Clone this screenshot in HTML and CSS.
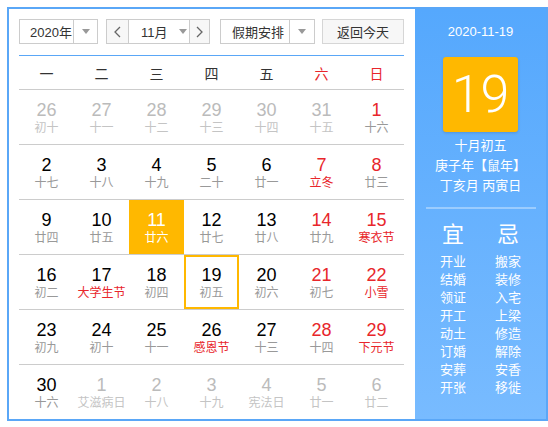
FILE: index.html
```html
<!DOCTYPE html>
<html lang="zh-CN">

<head>
    <meta charset="UTF-8" />
    <meta name="viewport" content="width=device-width, initial-scale=1.0" />
    <title>万年历</title>
    <link rel="stylesheet" href="styles.css">
</head>

<body>
    <div class="calendar">
        <div class="main">
            <div class="toolbar">
                <div class="select year">
                    <span class="value">2020年</span>
                    <span class="arrow"><i class="caret"></i></span>
                </div>
                <div class="select month">
                    <span class="step">
                        <svg width="7" height="12" viewBox="0 0 7 12"><polyline points="6,1 1,6 6,11" fill="none" stroke="#666" stroke-width="1.3" /></svg>
                    </span>
                    <span class="value">11月<i class="caret"></i></span>
                    <span class="step next">
                        <svg width="7" height="12" viewBox="0 0 7 12"><polyline points="1,1 6,6 1,11" fill="none" stroke="#666" stroke-width="1.3" /></svg>
                    </span>
                </div>
                <div class="select holiday">
                    <span class="value">假期安排</span>
                    <span class="arrow"><i class="caret"></i></span>
                </div>
                <button class="today" type="button">返回今天</button>
            </div>

            <div class="weekdays">
                <span>一</span><span>二</span><span>三</span><span>四</span><span>五</span>
                <span class="red">六</span><span class="red">日</span>
            </div>

            <div class="week">
                <div class="day other"><b>26</b><em>初十</em></div>
                <div class="day other"><b>27</b><em>十一</em></div>
                <div class="day other"><b>28</b><em>十二</em></div>
                <div class="day other"><b>29</b><em>十三</em></div>
                <div class="day other"><b>30</b><em>十四</em></div>
                <div class="day other"><b>31</b><em>十五</em></div>
                <div class="day weekend"><b>1</b><em>十六</em></div>
            </div>
            <div class="week">
                <div class="day"><b>2</b><em>十七</em></div>
                <div class="day"><b>3</b><em>十八</em></div>
                <div class="day"><b>4</b><em>十九</em></div>
                <div class="day"><b>5</b><em>二十</em></div>
                <div class="day"><b>6</b><em>廿一</em></div>
                <div class="day weekend"><b>7</b><em class="fest">立冬</em></div>
                <div class="day weekend"><b>8</b><em>廿三</em></div>
            </div>
            <div class="week">
                <div class="day"><b>9</b><em>廿四</em></div>
                <div class="day"><b>10</b><em>廿五</em></div>
                <div class="day active"><b>11</b><em>廿六</em></div>
                <div class="day"><b>12</b><em>廿七</em></div>
                <div class="day"><b>13</b><em>廿八</em></div>
                <div class="day weekend"><b>14</b><em>廿九</em></div>
                <div class="day weekend"><b>15</b><em class="fest">寒衣节</em></div>
            </div>
            <div class="week">
                <div class="day"><b>16</b><em>初二</em></div>
                <div class="day"><b>17</b><em class="fest">大学生节</em></div>
                <div class="day"><b>18</b><em>初四</em></div>
                <div class="day selected"><b>19</b><em>初五</em></div>
                <div class="day"><b>20</b><em>初六</em></div>
                <div class="day weekend"><b>21</b><em>初七</em></div>
                <div class="day weekend"><b>22</b><em class="fest">小雪</em></div>
            </div>
            <div class="week">
                <div class="day"><b>23</b><em>初九</em></div>
                <div class="day"><b>24</b><em>初十</em></div>
                <div class="day"><b>25</b><em>十一</em></div>
                <div class="day"><b>26</b><em class="fest">感恩节</em></div>
                <div class="day"><b>27</b><em>十三</em></div>
                <div class="day weekend"><b>28</b><em>十四</em></div>
                <div class="day weekend"><b>29</b><em class="fest">下元节</em></div>
            </div>
            <div class="week last">
                <div class="day"><b>30</b><em>十六</em></div>
                <div class="day other"><b>1</b><em>艾滋病日</em></div>
                <div class="day other"><b>2</b><em>十八</em></div>
                <div class="day other"><b>3</b><em>十九</em></div>
                <div class="day other"><b>4</b><em>宪法日</em></div>
                <div class="day other"><b>5</b><em>廿一</em></div>
                <div class="day other"><b>6</b><em>廿二</em></div>
            </div>
        </div>

        <div class="side">
            <div class="date">2020-11-19</div>
            <div class="bigday">19</div>
            <div class="lunar">
                <p>十月初五</p>
                <p>庚子年【鼠年】</p>
                <p>丁亥月 丙寅日</p>
            </div>
            <div class="divider"></div>
            <div class="advice">
                <ul>
                    <li class="head">宜</li>
                    <li>开业</li>
                    <li>结婚</li>
                    <li>领证</li>
                    <li>开工</li>
                    <li>动土</li>
                    <li>订婚</li>
                    <li>安葬</li>
                    <li>开张</li>
                </ul>
                <ul>
                    <li class="head">忌</li>
                    <li>搬家</li>
                    <li>装修</li>
                    <li>入宅</li>
                    <li>上梁</li>
                    <li>修造</li>
                    <li>解除</li>
                    <li>安香</li>
                    <li>移徙</li>
                </ul>
            </div>
        </div>
    </div>
</body>

</html>
```

FILE: styles.css
```css
body {
    margin: 0;
    font-family: "Liberation Sans", "Noto Sans CJK SC", sans-serif;
    background-color: white;
    color: #333;
}

.calendar {
    display: flex;
    margin: 7px 0 0 7px;
    width: 537px;
    height: 410px;
    border: 2px solid #5aa7f7;
}

.main {
    width: 385px;
    padding: 10px 11px 0 10px;
}

/* toolbar */

.toolbar {
    display: flex;
    height: 25px;
    padding-bottom: 11px;
    border-bottom: 1px solid #5aa7f7;
    font-size: 13px;
}

.select {
    display: flex;
    box-sizing: border-box;
    height: 25px;
    border: 1px solid #ccc;
    background-color: white;
}

.select .value {
    display: flex;
    align-items: center;
    white-space: nowrap;
    color: #333;
}

.select .arrow {
    display: flex;
    align-items: center;
    justify-content: center;
    border-left: 1px solid #ccc;
}

.caret {
    display: inline-block;
    flex-shrink: 0;
    width: 0;
    height: 0;
    border-left: 4px solid transparent;
    border-right: 4px solid transparent;
    border-top: 5px solid #999;
}

.year {
    width: 79px;
}

.year .value {
    width: 54px;
    padding-left: 10px;
    box-sizing: border-box;
}

.year .arrow {
    width: 23px;
}

.month {
    width: 104px;
    margin-left: 8px;
}

.month .step {
    display: flex;
    align-items: center;
    justify-content: center;
    width: 21px;
    background-color: #f7f7f7;
}

.month .step.next {
    width: 19px;
    border-left: 1px solid #ccc;
}

.month .value {
    width: 61px;
    box-sizing: border-box;
    padding-left: 12px;
    border-left: 1px solid #ccc;
    gap: 11px;
}

.holiday {
    width: 95px;
    margin-left: 10px;
}

.holiday .value {
    width: 69px;
    box-sizing: border-box;
    padding-left: 11px;
}

.holiday .arrow {
    width: 24px;
}

.today {
    width: 82px;
    height: 25px;
    margin-left: 7px;
    border: 1px solid #d6d6d6;
    background-color: #f7f7f7;
    font-family: inherit;
    font-size: 13px;
    color: #333;
    padding: 0;
}

/* grid */

.weekdays {
    display: grid;
    grid-template-columns: repeat(7, 55px);
    height: 33px;
    align-items: center;
    border-bottom: 1px solid #ccc;
    font-size: 14px;
    text-align: center;
    color: #333;
}

.red {
    color: #e8262b;
}

.week {
    display: grid;
    grid-template-columns: repeat(7, 55px);
    border-bottom: 1px solid #ccc;
}

.week.last {
    border-bottom: none;
}

.day {
    display: flex;
    flex-direction: column;
    align-items: center;
    height: 54px;
    box-sizing: border-box;
    padding-top: 10px;
}

.day b {
    font-weight: normal;
    font-size: 18px;
    line-height: 20px;
    color: #000;
}

.day em {
    font-style: normal;
    font-size: 12px;
    line-height: 17px;
    color: #999;
}

.day.weekend b {
    color: #e8262b;
}

.day em.fest {
    color: #e8262b;
}

.day.other b {
    color: #bbb;
}

.day.other em {
    color: #c4c4c4;
}

.day.active {
    background-color: #ffb800;
}

.day.active b,
.day.active em {
    color: white;
}

.day.selected {
    box-shadow: inset 0 0 0 2px #ffb800;
}

/* side panel */

.side {
    width: 131px;
    background: linear-gradient(#55a8fd, #78bbff);
    color: white;
    text-align: center;
}

.date {
    margin-top: 13px;
    font-size: 13px;
    line-height: 20px;
}

.bigday {
    width: 75px;
    height: 75px;
    margin: 15px auto 0;
    background-color: #ffb800;
    border-radius: 3px;
    box-shadow: 0 1px 3px rgba(0, 0, 0, 0.15);
    font-family: Roboto, "Liberation Sans", sans-serif;
    font-weight: 300;
    font-size: 52px;
    line-height: 75px;
}

.lunar {
    margin-top: 4px;
    font-size: 13px;
    line-height: 20px;
}

.lunar p {
    margin: 0;
}

.divider {
    width: 110px;
    height: 2px;
    margin: 11px auto 0;
    background-color: rgba(255, 255, 255, 0.35);
}

.advice {
    display: flex;
    justify-content: center;
    gap: 5px;
    margin-top: 12px;
}

.advice ul {
    list-style: none;
    margin: 0;
    padding: 0;
    width: 50px;
    font-size: 13px;
    line-height: 18px;
}

.advice .head {
    font-size: 22px;
    line-height: 28px;
    margin-bottom: 4px;
}
```
